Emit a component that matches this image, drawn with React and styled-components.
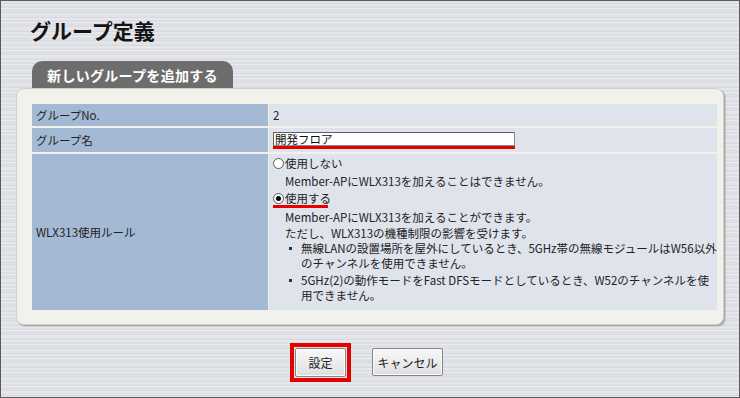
import React from "react";
import styled, { createGlobalStyle } from "styled-components";

const GlobalStyle = createGlobalStyle`
  html, body { margin: 0; padding: 0; background: #dfe1e6; }
  body { font-family: "Noto Sans CJK JP", "Noto Sans", sans-serif; }
`;

const Frame = styled.div`
  width: 740px;
  height: 398px;
  box-sizing: border-box;
  border: 1px solid #5b5b5b;
  padding: 0 15px;
  display: flex;
  flex-direction: column;
  background:
    repeating-linear-gradient(180deg,
      #e1e3e7 0px, #e1e3e7 2px,
      #d7d9de 2px, #d7d9de 3px,
      #e6e8ec 3px, #e6e8ec 5px,
      #dcdee3 5px, #dcdee3 7px,
      #e9ebee 7px, #e9ebee 8px,
      #dde0e4 8px, #dde0e4 11px,
      #d9dbe0 11px, #d9dbe0 12px,
      #e4e6ea 12px, #e4e6ea 14px);
`;

const Title = styled.h1`
  margin: 13px 0 0 14px;
  height: 32px;
  font-size: 21px;
  line-height: 32px;
  font-weight: bold;
  color: #141414;
`;

const Tab = styled.div`
  margin: 15px 0 0 16px;
  width: 201px;
  height: 27px;
  box-sizing: border-box;
  padding-top: 2px;
  border-radius: 10px 10px 0 0;
  background: #6d6d6d;
  color: #fff;
  font-size: 14px;
  font-weight: bold;
  letter-spacing: 0.3px;
  line-height: 25px;
  text-align: center;
`;

const Panel = styled.div`
  width: 708px;
  box-sizing: border-box;
  padding: 15px 15px 14px 15px;
  background: #f2f2ed;
  border: 1px solid #d0d0cc;
  border-radius: 8px;
  box-shadow: 1px 1px 0 #a6a6a6, 2px 2px 1px rgba(0, 0, 0, 0.12);
`;

const Table = styled.div`
  display: grid;
  grid-template-columns: 236px 1fr;
  column-gap: 1px;
  row-gap: 2px;
  font-size: 11.5px;
  color: #222;
`;

const Label = styled.div`
  background: #a3b9d4;
  display: flex;
  align-items: center;
  padding-left: 4px;
  min-height: ${(p) => p.$h || 0}px;
`;

const Value = styled.div`
  background: #dfe3ec;
  display: flex;
  flex-direction: column;
  justify-content: ${(p) => (p.$center ? "center" : "flex-start")};
  padding: ${(p) => p.$pad || "0 0 0 4px"};
  min-height: ${(p) => p.$h || 0}px;
  box-sizing: border-box;
`;

const Field = styled.div`
  display: flex;
  flex-direction: column;
  width: 242px;
`;

const TextInput = styled.input`
  box-sizing: border-box;
  width: 242px;
  height: 14px;
  margin: 0;
  padding: 0 1px;
  border: 1px solid #8a8a8a;
  border-top-color: #5e5e5e;
  border-left-color: #5e5e5e;
  background: #fff;
  font-family: inherit;
  font-size: 11.5px;
  line-height: 12px;
  color: #111;
  outline: none;
`;

const RedLine = styled.div`
  height: 3px;
  width: ${(p) => p.$w}px;
  background: #e60000;
`;

const RadioRow = styled.label`
  display: flex;
  align-items: center;
  height: 14px;
  margin-top: ${(p) => p.$mt || 0}px;
  line-height: 14px;
`;

const RadioMark = styled.span`
  width: 11px;
  height: 11px;
  box-sizing: border-box;
  border: 1px solid #5a5a5a;
  border-radius: 50%;
  background: #fff;
  display: flex;
  align-items: center;
  justify-content: center;
  margin-right: 1px;
  flex: none;
  &::after {
    content: "";
    width: 5px;
    height: 5px;
    border-radius: 50%;
    background: ${(p) => (p.$checked ? "#000" : "transparent")};
  }
`;

const Desc = styled.div`
  padding-left: 12px;
  margin-top: ${(p) => p.$mt || 0}px;
  line-height: 16px;
  white-space: nowrap;
`;

const Bullets = styled.div`
  display: flex;
  flex-direction: column;
  gap: 2px;
`;

const BulletItem = styled.div`
  display: flex;
  align-items: flex-start;
  line-height: 15px;
  white-space: nowrap;
`;

const Dot = styled.span`
  flex: none;
  width: 3px;
  height: 3px;
  background: #333;
  margin: 6px 9px 0 16px;
`;

const ButtonRow = styled.div`
  display: flex;
  justify-content: center;
  align-items: flex-start;
  gap: 26px;
  margin-top: 23px;
  padding-right: 2px;
`;

const Highlight = styled.div`
  display: flex;
  margin: -5px;
  padding: 1px;
  border: 4px solid #e60000;
`;

const Button = styled.button`
  width: ${(p) => p.$w}px;
  height: ${(p) => p.$h}px;
  box-sizing: border-box;
  padding: 0;
  border: 1px solid #858585;
  border-radius: 2px;
  background: linear-gradient(180deg, #f8f8f8 0%, #ececec 50%, #dedede 100%);
  box-shadow: inset 0 0 0 1px #fbfbfb;
  font-family: inherit;
  font-size: 12px;
  color: #1e1e1e;
`;

export default function App() {
  return (
    <>
      <GlobalStyle />
      <Frame>
        <Title>グループ定義</Title>
        <Tab>新しいグループを追加する</Tab>
        <Panel>
          <Table>
            <Label $h={22}>グループNo.</Label>
            <Value $h={22} $center>2</Value>

            <Label $h={24}>グループ名</Label>
            <Value $h={24} $pad="4px 0 3px 4px">
              <Field>
                <TextInput defaultValue="開発フロア" readOnly />
                <RedLine $w={242} />
              </Field>
            </Value>

            <Label>WLX313使用ルール</Label>
            <Value $pad="2px 0 7px 4px">
              <RadioRow>
                <RadioMark />
                使用しない
              </RadioRow>
              <Desc $mt={3}>Member-APにWLX313を加えることはできません。</Desc>
              <RadioRow $mt={2}>
                <RadioMark $checked />
                使用する
              </RadioRow>
              <RedLine $w={55} />
              <Desc $mt={1}>
                Member-APにWLX313を加えることができます。
                <br />
                ただし、WLX313の機種制限の影響を受けます。
              </Desc>
              <Bullets>
                <BulletItem>
                  <Dot />
                  <span>
                    無線LANの設置場所を屋外にしているとき、5GHz帯の無線モジュールはW56以外
                    <br />
                    のチャンネルを使用できません。
                  </span>
                </BulletItem>
                <BulletItem>
                  <Dot />
                  <span>
                    5GHz(2)の動作モードをFast DFSモードとしているとき、W52のチャンネルを使
                    <br />
                    用できません。
                  </span>
                </BulletItem>
              </Bullets>
            </Value>
          </Table>
        </Panel>
        <ButtonRow>
          <Highlight>
            <Button $w={51} $h={29}>設定</Button>
          </Highlight>
          <Button $w={71} $h={28}>キャンセル</Button>
        </ButtonRow>
      </Frame>
    </>
  );
}
